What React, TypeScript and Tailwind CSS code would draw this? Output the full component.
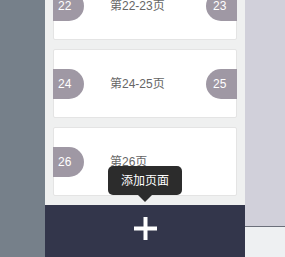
const font = { fontFamily: '"Liberation Sans", "Noto Sans CJK SC", sans-serif' };

type Page = { left: number; right?: number };

const PAGES: Page[] = [
  { left: 22, right: 23 },
  { left: 24, right: 25 },
  { left: 26 },
];

function PageCard({ page }: { page: Page }) {
  const label = page.right ? `第${page.left}-${page.right}页` : `第${page.left}页`;
  return (
    <div className="h-[69px] bg-white border border-[#e4e4e4] rounded-[2px] flex items-center">
      <div className="-ml-px w-[31px] h-[30px] bg-[#9f98a4] rounded-r-full flex items-center pl-[5px] text-white text-[12px]">
        {page.left}
      </div>
      <div className="ml-[26px] text-[12px] text-[#666] mt-[1px]">{label}</div>
      <div className="flex-1" />
      {page.right && (
        <div className="-mr-px w-[31px] h-[30px] bg-[#9f98a4] rounded-l-full flex items-center pl-[7px] text-white text-[12px]">
          {page.right}
        </div>
      )}
    </div>
  );
}

export default function App() {
  return (
    <div className="flex w-[285px] h-[257px] overflow-hidden" style={font}>
      <div className="w-[45px] shrink-0 bg-[#76808a]" />

      <div className="relative w-[200px] shrink-0 flex flex-col">
        <div className="flex-1 overflow-hidden bg-[#eff0f0]">
          <div className="mt-[-29px] mx-[8px] flex flex-col gap-[9px]">
            {PAGES.map(p => (
              <PageCard key={p.left} page={p} />
            ))}
          </div>
        </div>
        <div className="h-[52px] shrink-0 bg-[#33364b] flex items-center justify-center pb-[6px]">
          <svg width="23" height="23" viewBox="0 0 23 23">
            <rect x="9.5" y="0" width="4" height="23" fill="#fff" />
            <rect x="0" y="9.5" width="23" height="4" fill="#fff" />
          </svg>
        </div>

        <div className="absolute left-[63px] top-[166px] flex flex-col items-center">
          <div className="w-[74px] h-[29px] rounded-[5px] bg-[#2c2c2c] text-white text-[12px] flex items-center justify-center">
            添加页面
          </div>
          <div className="w-0 h-0 border-l-[7px] border-r-[7px] border-t-[7px] border-l-transparent border-r-transparent border-t-[#2c2c2c]" />
        </div>
      </div>

      <div className="flex-1 flex flex-col">
        <div className="h-[227px] bg-[#d1d0da] border-b border-[#6b6f7a]" />
        <div className="flex-1 bg-[#eef0f2]" />
      </div>
    </div>
  );
}
